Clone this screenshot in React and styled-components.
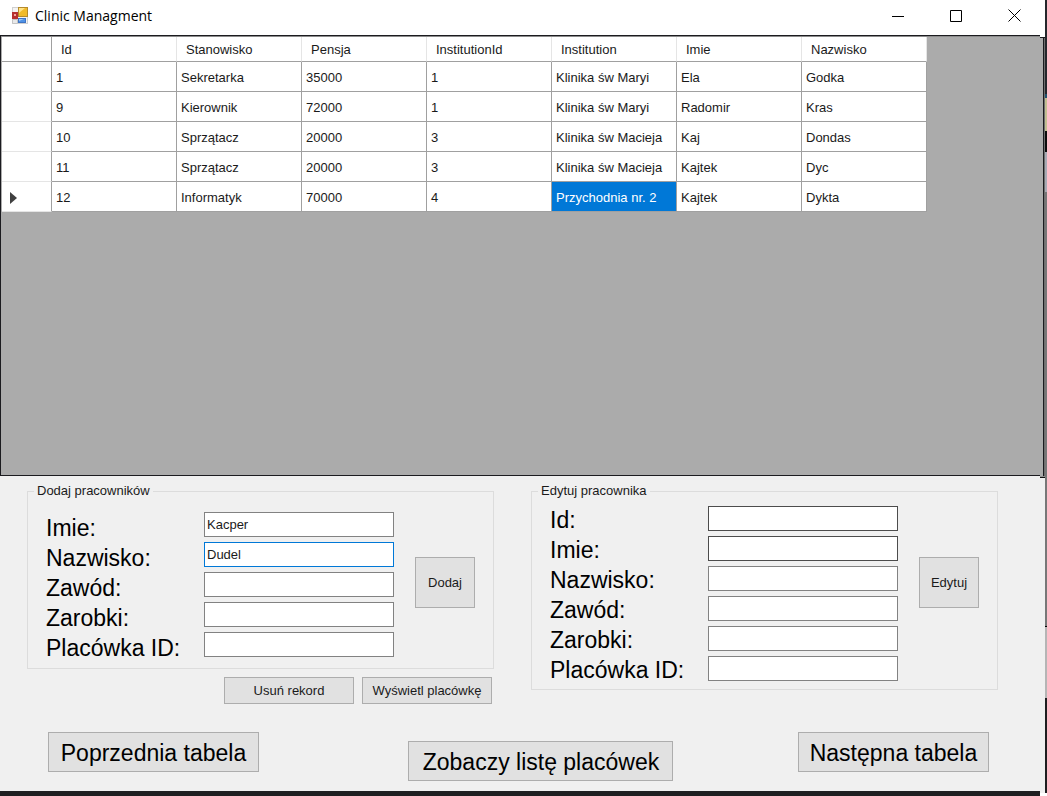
import React from "react";
import styled, { createGlobalStyle } from "styled-components";

const GlobalStyle = createGlobalStyle`
  *, *::before, *::after { box-sizing: border-box; }
  body {
    margin: 0;
    background: #f0f0f0;
    color: #1a1a1a;
    font: 14px/16px "Liberation Sans", Arial, sans-serif;
  }
`;

const Desktop = styled.div`
  display: flex;
  min-height: 100vh;
`;

const Window = styled.div`
  flex: 1;
  min-width: 0;
  display: flex;
  flex-direction: column;
`;

const Backdrop = styled.div`
  width: 2px;
  display: flex;
  flex-direction: column;
`;

const BackdropPiece = styled.div`
  flex: ${(p) => p.$size} 0 0;
  background: ${(p) => p.$tone};
`;

const TitleBar = styled.header`
  display: flex;
  align-items: center;
  height: 35px;
  padding: 0 2px 4px 11px;
  background: #fff;
`;

const Title = styled.h1`
  flex: 1;
  margin: 0 0 0 6px;
  font: 400 14px/20px "Open Sans", "Noto Sans", sans-serif;
  color: #000;
`;

const CaptionButton = styled.button`
  display: grid;
  place-items: center;
  width: 58px;
  height: 31px;
  padding: 0;
  border: 0;
  background: #fff;
`;

const Split = styled.div`
  display: flex;
  flex: ${(p) => (p.$grow ? 1 : "none")};
`;

const GridPanel = styled.main`
  flex: 1;
  min-width: 0;
  padding: 1px 0 0 1px;
  border: 1px solid #1b1b1f;
  border-right: 0;
  background: #ababab;
  box-shadow: inset 0 1px 0 #8c8c8c;
`;

const GridEdge = styled.div`
  width: 5px;
  border-top: 2px solid #fff;
  background: #ababab;
  box-shadow: inset 0 1px 0 #1b1b1f, inset -1px 0 0 #6f6f6f, inset -2px 0 0 #1b1b1f;
`;

const FormEdge = styled.div`
  width: 5px;
  border-bottom: 3px solid #fff;
  background: #f0f0f0;
  box-shadow: inset 0 1px 0 #909090, inset 0 2px 0 #111;
`;

const DataTable = styled.table`
  table-layout: fixed;
  width: 925px;
  border-collapse: separate;
  border-spacing: 0;
  background: #fff;
`;

const ColumnHead = styled.th`
  width: ${(p) => (p.$corner ? "50px" : "125px")};
  height: 25px;
  padding: 2px 0 0 9px;
  border-right: 1px solid ${(p) => (p.$corner ? "#a0a0a0" : "#e5e5e5")};
  border-bottom: 1px solid #a0a0a0;
  font-weight: 400;
  font-size: 13px;
  text-align: left;
`;

const RowHead = styled.th`
  height: 30px;
  padding: 2px 0 0 8px;
  border-right: 1px solid #a0a0a0;
  border-bottom: 1px solid #e5e5e5;
  text-align: left;

  svg { display: block; }
`;

const Cell = styled.td`
  height: 30px;
  padding: 2px 0 0 4px;
  border-right: 1px solid #a0a0a0;
  border-bottom: 1px solid #a0a0a0;
  font-size: 13px;
  white-space: nowrap;
  background: ${(p) => (p.$selected ? "#0078d7" : "#fff")};
  color: ${(p) => (p.$selected ? "#fff" : "inherit")};
`;

const FormArea = styled.div`
  flex: 1;
  min-width: 0;
  padding-top: 7px;
  border-bottom: 5px solid #1f1f21;
  background: #f0f0f0;
`;

const Groups = styled.div`
  display: grid;
  grid-template-columns: 1fr 1fr;
  align-items: start;
  gap: 37px;
  padding: 0 42px 0 27px;
`;

const Group = styled.fieldset`
  min-width: 0;
  margin: 0;
  padding: 0;
  border: 1px solid #dcdcdc;
`;

const GroupTitle = styled.legend`
  margin-left: 6px;
  padding: 0 3px;
  font-size: 13px;
`;

const GroupBody = styled.div`
  display: flex;
  align-items: flex-start;
  gap: 21px;
  padding: 0 18px;
`;

const Fields = styled.div`
  flex: 1;
  display: grid;
  gap: 5px;
  padding: ${(p) => (p.$compact ? "7px 0 8px" : "13px 0 11px")};
`;

const Field = styled.div`
  display: flex;
  height: 25px;
`;

const FieldLabel = styled.label`
  flex: none;
  width: 158px;
  padding-top: ${(p) => (p.$compact ? "0" : "2px")};
  font-size: 23px;
  line-height: 28px;
  color: #000;
`;

const borderTones = { normal: "#828282", focus: "#0078d7", dark: "#4c4c4c" };

const TextBox = styled.input`
  flex: 1;
  min-width: 0;
  height: 25px;
  padding: 0 2px;
  border: 1px solid ${(p) => borderTones[p.$tone]};
  border-radius: 0;
  outline: 0;
  background: #fff;
  color: #1a1a1a;
  font: 13px/16px "Liberation Sans", Arial, sans-serif;
`;

const Button = styled.button`
  padding: 0;
  border: 1px solid #adadad;
  border-radius: 0;
  background: #e1e1e1;
  color: #1a1a1a;
  font: 13px/16px "Liberation Sans", Arial, sans-serif;
`;

const SubmitButton = styled(Button)`
  flex: none;
  width: 60px;
  height: 51px;
  margin-top: 58px;
`;

const RecordActions = styled.div`
  display: flex;
  justify-content: flex-end;
  gap: 8px;
  padding: 8px 2px 0 0;
`;

const RecordButton = styled(Button)`
  width: 130px;
  height: 27px;
`;

const TableNav = styled.nav`
  display: grid;
  grid-template-columns: 211px 6fr 265px 5fr 191px;
  align-items: start;
  padding: 28px 51px 10px 48px;
`;

const NavButton = styled(Button)`
  grid-column: ${(p) => p.$column};
  height: 40px;
  margin-top: ${(p) => (p.$lowered ? "9px" : "0")};
  padding-top: 1px;
  font-size: 23px;
  line-height: 28px;
  color: #000;
`;

const columns = ["Id", "Stanowisko", "Pensja", "InstitutionId", "Institution", "Imie", "Nazwisko"];

const employees = [
  ["1", "Sekretarka", "35000", "1", "Klinika św Maryi", "Ela", "Godka"],
  ["9", "Kierownik", "72000", "1", "Klinika św Maryi", "Radomir", "Kras"],
  ["10", "Sprzątacz", "20000", "3", "Klinika św Macieja", "Kaj", "Dondas"],
  ["11", "Sprzątacz", "20000", "3", "Klinika św Macieja", "Kajtek", "Dyc"],
  ["12", "Informatyk", "70000", "4", "Przychodnia nr. 2", "Kajtek", "Dykta"],
];

const current = { row: 4, column: 4 };

const addFields = [
  { id: "add-imie", label: "Imie:", value: "Kacper" },
  { id: "add-nazwisko", label: "Nazwisko:", value: "Dudel", tone: "focus" },
  { id: "add-zawod", label: "Zawód:" },
  { id: "add-zarobki", label: "Zarobki:" },
  { id: "add-placowka", label: "Placówka ID:" },
];

const editFields = [
  { id: "edit-id", label: "Id:", tone: "dark" },
  { id: "edit-imie", label: "Imie:", tone: "dark" },
  { id: "edit-nazwisko", label: "Nazwisko:" },
  { id: "edit-zawod", label: "Zawód:" },
  { id: "edit-zarobki", label: "Zarobki:" },
  { id: "edit-placowka", label: "Placówka ID:" },
];

const backdropPieces = [
  [94, "#25272c"], [4, "#1f506c"], [33, "#c3bf92"], [21, "#0c0c0c"], [40, "#a9abb5"],
  [434, "#777"], [1, "#000"], [71, "#b5b5b5"], [95, "#1e1e20"], [3, "#fff"],
];

function AppIcon() {
  return (
    <svg width="18" height="18" viewBox="0 0 18 18" aria-hidden="true">
      <rect x="1.500" y="0.500" width="15" height="16" fill="#f4f4f4" stroke="#d0d0d0" />
      <path d="M1.500 12.500h5v4h-5z" fill="#e9e9e9" stroke="#c4c4c4" />
      <rect x="1" y="5" width="6" height="7" fill="#b5302f" />
      <rect x="3" y="7" width="2" height="2" fill="#f0a79f" />
      <rect x="7.500" y="0.500" width="9" height="9" fill="#f1bb2b" stroke="#b48a2c" />
      <path d="M8 1h6l-6 5z" fill="#ffe388" />
      <rect x="7.500" y="11.500" width="7" height="4" fill="#4f92e6" stroke="#3f74c4" />
      <path d="M8 12h5l-5 2z" fill="#9cc7fa" />
    </svg>
  );
}

function Caption({ label, children }) {
  return (
    <CaptionButton type="button" aria-label={label}>
      <svg width="13" height="13" viewBox="0 0 13 13" fill="none" stroke="#000">{children}</svg>
    </CaptionButton>
  );
}

function GroupForm({ title, fields, action, compact }) {
  return (
    <Group>
      <GroupTitle>{title}</GroupTitle>
      <GroupBody>
        <Fields $compact={compact}>
          {fields.map((f) => (
            <Field key={f.id}>
              <FieldLabel htmlFor={f.id} $compact={compact}>{f.label}</FieldLabel>
              <TextBox id={f.id} type="text" defaultValue={f.value} $tone={f.tone || "normal"} />
            </Field>
          ))}
        </Fields>
        <SubmitButton type="button">{action}</SubmitButton>
      </GroupBody>
    </Group>
  );
}

export default function App() {
  return (
    <Desktop>
      <GlobalStyle />
      <Window>
        <TitleBar>
          <AppIcon />
          <Title>Clinic Managment</Title>
          <Caption label="Minimize"><path d="M0 7.5h12" /></Caption>
          <Caption label="Maximize"><path d="M.5 1.5h11v11h-11z" /></Caption>
          <Caption label="Close"><path d="M.5 .5l12 12M12.500 .5l-12 12" /></Caption>
        </TitleBar>

        <Split $grow>
          <GridPanel>
            <DataTable>
              <thead>
                <tr>
                  <ColumnHead $corner />
                  {columns.map((c) => <ColumnHead key={c} scope="col">{c}</ColumnHead>)}
                </tr>
              </thead>
              <tbody>
                {employees.map((employee, r) => (
                  <tr key={employee[0]}>
                    <RowHead scope="row">
                      {r === current.row && (
                        <svg width="8" height="12" viewBox="0 0 8 12" aria-label="Current row">
                          <path d="M0 0l7 6-7 6z" fill="#404040" />
                        </svg>
                      )}
                    </RowHead>
                    {employee.map((value, c) => (
                      <Cell key={columns[c]} $selected={r === current.row && c === current.column}>{value}</Cell>
                    ))}
                  </tr>
                ))}
              </tbody>
            </DataTable>
          </GridPanel>
          <GridEdge />
        </Split>

        <Split>
          <FormArea>
            <Groups>
              <div>
                <GroupForm title="Dodaj pracowników" fields={addFields} action="Dodaj" />
                <RecordActions>
                  <RecordButton type="button">Usuń rekord</RecordButton>
                  <RecordButton type="button">Wyświetl placówkę</RecordButton>
                </RecordActions>
              </div>
              <GroupForm title="Edytuj pracownika" fields={editFields} action="Edytuj" compact />
            </Groups>
            <TableNav>
              <NavButton type="button" $column={1}>Poprzednia tabela</NavButton>
              <NavButton type="button" $column={3} $lowered>Zobaczy listę placówek</NavButton>
              <NavButton type="button" $column={5}>Następna tabela</NavButton>
            </TableNav>
          </FormArea>
          <FormEdge />
        </Split>
      </Window>
      <Backdrop>
        {backdropPieces.map(([size, tone], i) => <BackdropPiece key={i} $size={size} $tone={tone} />)}
      </Backdrop>
    </Desktop>
  );
}
